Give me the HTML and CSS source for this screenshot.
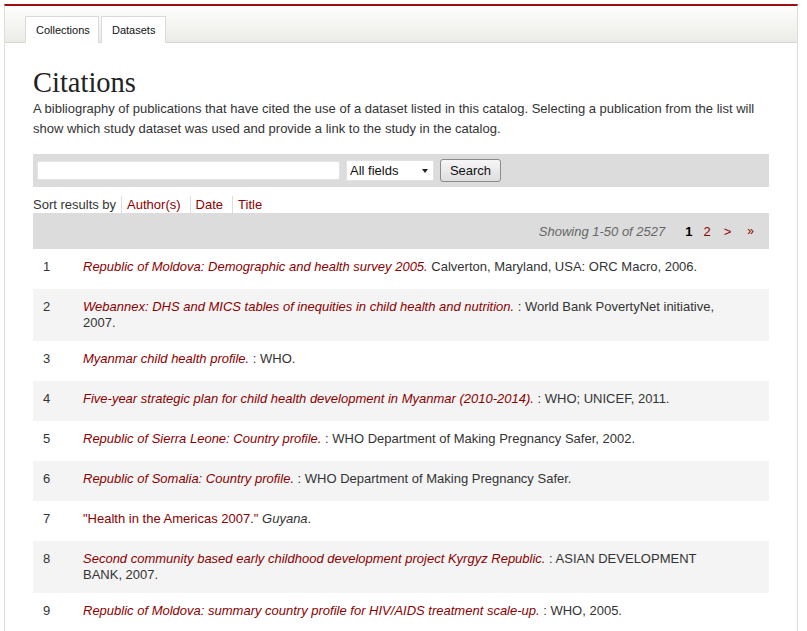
FILE: index.html
```html
<!DOCTYPE html>
<html>
<head>
<meta charset="utf-8">
<link rel="stylesheet" href="styles.css">
</head>
<body>
<div class="page">
  <div class="header">
    <a class="tab">Collections</a>
    <a class="tab">Datasets</a>
  </div>
  <div class="content">
    <h1 class="title">Citations</h1>
    <p class="intro">A bibliography of publications that have cited the use of a dataset listed in this catalog. Selecting a publication from the list will show which study dataset was used and provide a link to the study in the catalog.</p>
    <div class="searchbar">
      <input class="search-input" type="text">
      <div class="select">All fields<span class="arrow"></span></div>
      <button class="btn">Search</button>
    </div>
    <div class="sortbar">
      <span class="sort-label">Sort results by</span>
      <a class="sort-link">Author(s)</a>
      <a class="sort-link">Date</a>
      <a class="sort-link">Title</a>
    </div>
    <div class="pager">
      <span class="showing">Showing 1-50 of 2527</span>
      <span class="page-cur">1</span>
      <a class="page-link">2</a>
      <a class="page-link next">&gt;</a>
      <a class="page-link last">&raquo;</a>
    </div>
    <div class="list">
      <div class="row"><div class="num">1</div><div class="cite"><a class="ct">Republic of Moldova: Demographic and health survey 2005.</a> Calverton, Maryland, USA: ORC Macro, 2006.</div></div>
      <div class="row alt"><div class="num">2</div><div class="cite"><a class="ct">Webannex: DHS and MICS tables of inequities in child health and nutrition.</a> : World Bank PovertyNet initiative, 2007.</div></div>
      <div class="row"><div class="num">3</div><div class="cite"><a class="ct">Myanmar child health profile.</a> : WHO.</div></div>
      <div class="row alt"><div class="num">4</div><div class="cite"><a class="ct">Five-year strategic plan for child health development in Myanmar (2010-2014).</a> : WHO; UNICEF, 2011.</div></div>
      <div class="row"><div class="num">5</div><div class="cite"><a class="ct">Republic of Sierra Leone: Country profile.</a> : WHO Department of Making Pregnancy Safer, 2002.</div></div>
      <div class="row alt"><div class="num">6</div><div class="cite"><a class="ct">Republic of Somalia: Country profile.</a> : WHO Department of Making Pregnancy Safer.</div></div>
      <div class="row"><div class="num">7</div><div class="cite"><a class="ct plain">"Health in the Americas 2007."</a> <i>Guyana</i>.</div></div>
      <div class="row alt"><div class="num">8</div><div class="cite"><a class="ct">Second community based early childhood development project Kyrgyz Republic.</a> : ASIAN DEVELOPMENT BANK, 2007.</div></div>
      <div class="row"><div class="num">9</div><div class="cite"><a class="ct">Republic of Moldova: summary country profile for HIV/AIDS treatment scale-up.</a> : WHO, 2005.</div></div>
    </div>
  </div>
</div>
</body>
</html>
```

FILE: styles.css
```css
html, body {
  margin: 0;
  padding: 0;
  background: #fff;
}
body {
  font-family: "Liberation Sans", Arial, sans-serif;
  color: #333;
}
.page {
  margin: 4px 0 0 4px;
  width: 792px;
  border-top: 2px solid #9b0f0f;
  border-left: 1px solid #ddd;
  border-right: 1px solid #ddd;
  min-height: 700px;
}
.header {
  height: 36px;
  background: linear-gradient(#fefefe, #ebebe6);
  border-bottom: 1px solid #d6d6d2;
  display: flex;
  align-items: flex-end;
  padding-left: 20px;
  gap: 2px;
}
.tab {
  display: block;
  height: 26px;
  line-height: 27px;
  padding: 0 10px;
  background: #fff;
  border: 1px solid #dadada;
  border-bottom: none;
  font-size: 11px;
  color: #111;
  margin-bottom: -1px;
}
.tab:first-child { width: 52px; }
.content {
  padding: 0 28px;
}
.title {
  margin: 25px 0 0 0;
  font-family: "Liberation Serif", "Times New Roman", serif;
  font-weight: normal;
  font-size: 28.5px;
  line-height: 30px;
  color: #222;
}
.intro {
  margin: 1px 0 0 0;
  font-size: 13px;
  line-height: 20px;
  color: #333;
}
.searchbar {
  margin-top: 15px;
  height: 33px;
  background: #dcdcdc;
  display: flex;
  align-items: center;
  padding-left: 4px;
}
.search-input {
  width: 303px;
  height: 19px;
  box-sizing: border-box;
  border: 1px solid #e4e4e4;
  border-radius: 2px;
  background: #fff;
  margin: 0;
  padding: 0;
}
.select {
  margin-left: 6px;
  width: 88px;
  height: 21px;
  box-sizing: border-box;
  background: #fff;
  border: 1px solid #e2e2e2;
  font-size: 13px;
  line-height: 19px;
  padding-left: 3px;
  color: #111;
  position: relative;
}
.arrow {
  position: absolute;
  right: 5px;
  top: 8px;
  width: 0;
  height: 0;
  border-left: 3px solid transparent;
  border-right: 3px solid transparent;
  border-top: 4px solid #222;
}
.btn {
  margin-left: 6px;
  width: 61px;
  height: 23px;
  box-sizing: border-box;
  border: 1px solid #8a8a8a;
  border-radius: 3px;
  background: linear-gradient(#f6f6f6, #dedede);
  font-family: "Liberation Sans", Arial, sans-serif;
  font-size: 13px;
  color: #111;
  padding: 0;
}
.sortbar {
  margin-top: 9px;
  height: 17px;
  display: flex;
  align-items: center;
  font-size: 13px;
  color: #333;
}
.sort-label { margin-right: 5px; }
.sort-link {
  color: #8b0000;
  border-left: 1px solid #ddd;
  padding: 1px 9px 1px 5px;
}
.pager {
  margin-top: 0;
  height: 36px;
  background: #dcdcdc;
  display: flex;
  align-items: center;
  justify-content: flex-end;
  padding-right: 15px;
  font-size: 13px;
}
.showing {
  font-style: italic;
  color: #666;
  font-size: 13px;
  margin-right: 20px;
}
.page-cur {
  font-weight: bold;
  color: #000;
  margin-right: 11px;
}
.page-link {
  color: #8b0000;
  margin-right: 13px;
}
.page-link.next { margin-right: 16px; }
.page-link.last { margin-right: 0; font-size: 12px; }
.row {
  display: flex;
  padding: 10px 34px 10px 0;
  font-size: 13px;
  line-height: 16px;
  min-height: 20px;
}
.row.alt { background: #f4f4f4; }
.num {
  width: 40px;
  padding-left: 10px;
  flex: none;
}
.cite { flex: 1; color: #333; }
.ct {
  color: #8b0000;
  font-style: italic;
}
.ct.plain { font-style: normal; }
```
